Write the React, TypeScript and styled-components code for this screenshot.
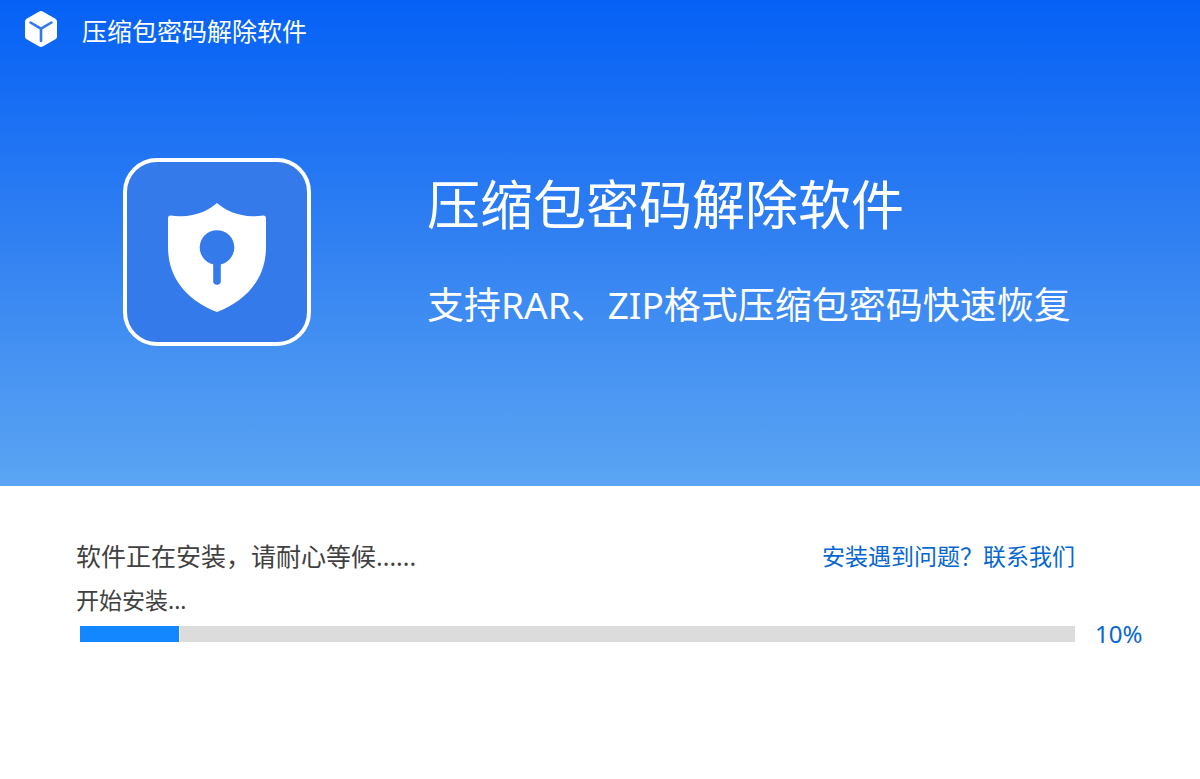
import React from "react";
import styled, { createGlobalStyle } from "styled-components";

const GlobalStyle = createGlobalStyle`
  *, *::before, *::after { box-sizing: border-box; }
  html, body, #root { height: 100%; }
  body {
    margin: 0;
    background: #ffffff;
    color: #404040;
    font-family: "Noto Sans", "Noto Sans CJK SC", sans-serif;
  }
  h1, p { margin: 0; font-weight: 400; }
`;

const Installer = styled.div`
  min-height: 100%;
  display: flex;
  flex-direction: column;
`;

const Hero = styled.header`
  background: linear-gradient(180deg, #0561f6 0%, #3281f2 50%, #5ba5f3 100%);
  color: #ffffff;
  padding-bottom: 140px;
`;

const TitleBar = styled.div`
  display: flex;
  align-items: center;
  gap: 24px;
  height: 58px;
  padding: 0 24px;
`;

const WindowTitle = styled.p`
  padding-top: 4px;
  font-size: 25px;
  line-height: 32px;
`;

const Banner = styled.div`
  display: flex;
  align-items: center;
  gap: 116px;
  padding: 100px 56px 0 123px;
`;

const LogoTile = styled.div`
  flex: none;
  display: grid;
  place-items: center;
  width: 188px;
  height: 188px;
  padding-top: 10px;
  border: 4px solid #ffffff;
  border-radius: 34px;
  background: #347aeb;
`;

const Copy = styled.div`
  display: flex;
  flex-direction: column;
  gap: 36px;
  padding-top: 6px;
`;

const ProductName = styled.h1`
  font-size: 53px;
  line-height: 64px;
`;

const Tagline = styled.p`
  font-size: 37px;
  line-height: 64px;
`;

const Body = styled.main`
  padding: 52px 56px 0 76px;
`;

const Grid = styled.div`
  display: grid;
  grid-template-columns: 1fr 49px;
  column-gap: 20px;
  align-items: center;
`;

const StatusRow = styled.div`
  display: flex;
  justify-content: space-between;
  align-items: center;
`;

const Status = styled.p`
  font-size: 25px;
  line-height: 36px;
`;

const Step = styled.label`
  grid-column: 1 / -1;
  padding-top: 4px;
  font-size: 23px;
  line-height: 44px;
`;

const HelpLink = styled.a`
  font-size: 23px;
  line-height: 36px;
  color: #0667d0;
  text-decoration: none;
`;

const Bar = styled.progress`
  appearance: none;
  display: block;
  justify-self: end;
  width: calc(100% - 4px);
  height: 16px;
  border: 0;
  background: #dcdcdc;

  &::-webkit-progress-bar { background: #dcdcdc; }
  &::-webkit-progress-value {
    background: #1287ff;
    border-right: 1px solid #f4f4f4;
  }
`;

const Percent = styled.output`
  font-size: 24px;
  line-height: 24px;
  color: #0667d0;
`;

const CubeIcon = () => (
  <svg width="34" height="38" viewBox="0 0 34 38" aria-hidden="true">
    <path
      d="M15.3 1.5Q17 .6 18.7 1.5L31.4 8.7Q33 9.6 33 11.5V26.5Q33 28.4 31.4 29.3L18.7 36.5Q17 37.4 15.3 36.5L2.6 29.3Q1 28.4 1 26.5V11.5Q1 9.6 2.6 8.7Z"
      fill="#ffffff"
    />
    <path
      d="M6.5 12.5L17 18.7L27.5 12.5M17 18.7V31"
      fill="none"
      stroke="#2f79ec"
      strokeWidth="2.6"
      strokeLinecap="round"
    />
  </svg>
);

const ShieldIcon = () => (
  <svg width="100" height="112" viewBox="0 0 100 112" aria-hidden="true">
    <path
      d="M50 2C58 9 70 15 86 15.3Q92 15.4 96 14.6Q99 14.4 99 17.5V46C99 78 79 100 50 111C21 100 1 78 1 46V17.5Q1 14.4 4 14.6Q8 15.4 14 15.3C30 15 42 9 50 2Z"
      fill="#ffffff"
    />
    <circle cx="50" cy="46.5" r="17.3" fill="#347aeb" />
    <path d="M50 58V80" stroke="#347aeb" strokeWidth="7.6" strokeLinecap="round" />
  </svg>
);

export default function App() {
  const progress = 10;

  return (
    <>
      <GlobalStyle />
      <Installer>
        <Hero>
          <TitleBar>
            <CubeIcon />
            <WindowTitle>压缩包密码解除软件</WindowTitle>
          </TitleBar>
          <Banner>
            <LogoTile>
              <ShieldIcon />
            </LogoTile>
            <Copy>
              <ProductName>压缩包密码解除软件</ProductName>
              <Tagline>支持RAR、ZIP格式压缩包密码快速恢复</Tagline>
            </Copy>
          </Banner>
        </Hero>
        <Body>
          <Grid>
            <StatusRow>
              <Status>软件正在安装，请耐心等候......</Status>
              <HelpLink href="#contact">安装遇到问题？联系我们</HelpLink>
            </StatusRow>
            <Step htmlFor="install-progress">开始安装...</Step>
            <Bar id="install-progress" value={progress} max={100} />
            <Percent htmlFor="install-progress">{progress}%</Percent>
          </Grid>
        </Body>
      </Installer>
    </>
  );
}
